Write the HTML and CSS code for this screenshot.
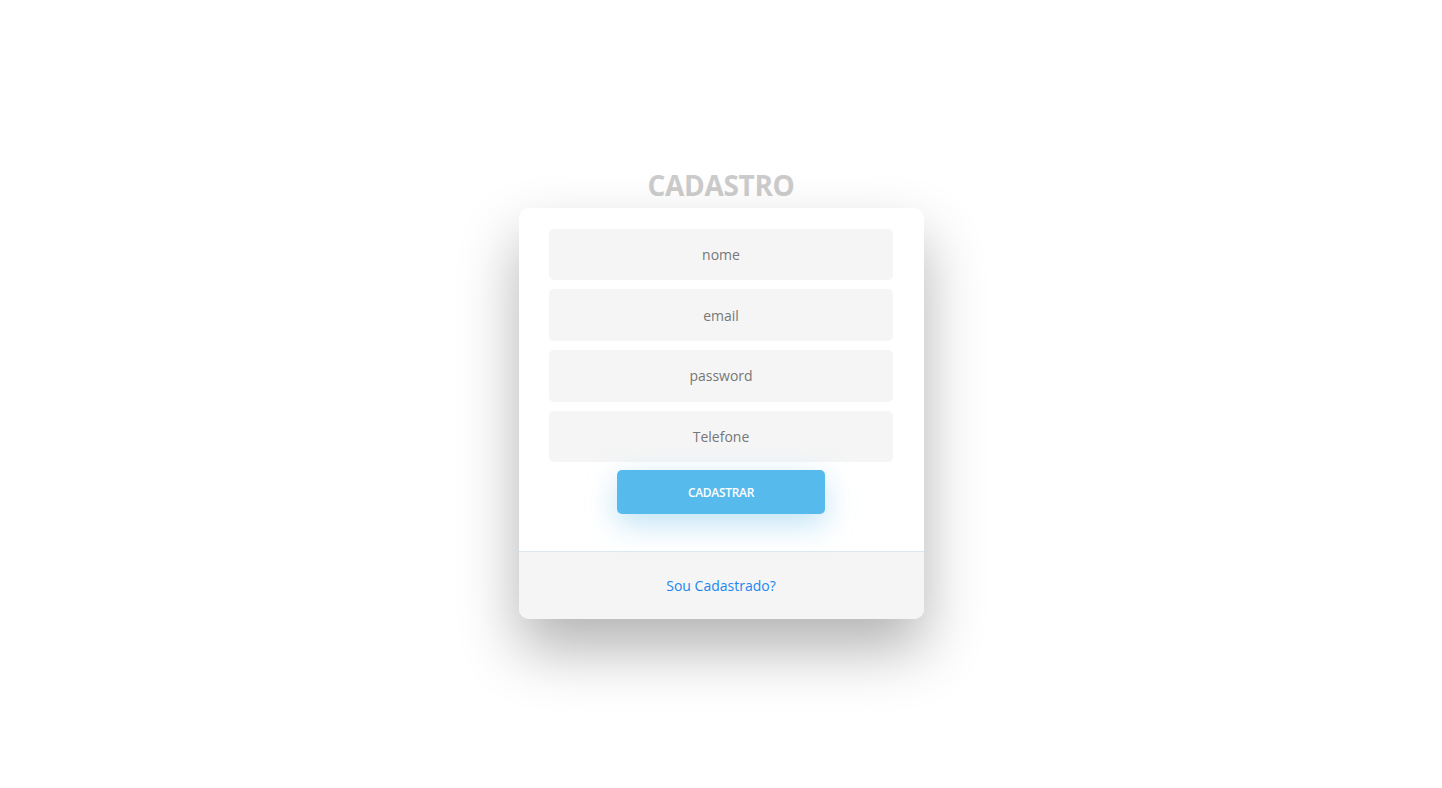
FILE: index.html
```html
<!DOCTYPE html>
<html lang="pt">
<head>
<meta charset="utf-8">
<title>Cadastro</title>
<link rel="stylesheet" href="styles.css">
</head>
<body>
<div class="wrapper">
  <h2 class="title">CADASTRO</h2>
  <div class="form-content">
    <form class="form">
      <input class="field" type="text" placeholder="nome">
      <input class="field" type="text" placeholder="email">
      <input class="field" type="text" placeholder="password">
      <input class="field" type="text" placeholder="Telefone">
      <button class="submit" type="button">CADASTRAR</button>
    </form>
    <div class="form-footer">
      <a class="link" href="#">Sou Cadastrado?</a>
    </div>
  </div>
</div>
</body>
</html>
```

FILE: styles.css
```css
html, body {
  margin: 0;
  padding: 0;
  background: #ffffff;
  font-family: "Open Sans", "Noto Sans", sans-serif;
}

.wrapper {
  min-height: 100vh;
  display: flex;
  flex-direction: column;
  align-items: center;
  justify-content: center;
  box-sizing: border-box;
  padding-bottom: 2px;
}

.title {
  margin: 0 0 5px 0;
  font-size: 28px;
  line-height: 36px;
  font-weight: 700;
  color: #cccccc;
  letter-spacing: -0.3px;
}

.form-content {
  width: 405px;
  background: #ffffff;
  border-radius: 10px;
  box-shadow: 0 30px 60px 0 rgba(0, 0, 0, 0.3);
  text-align: center;
  overflow: hidden;
}

.form {
  display: flex;
  flex-direction: column;
  align-items: center;
  padding: 21px 0 37px 0;
  gap: 9px;
}

.field {
  box-sizing: border-box;
  width: 344px;
  height: 51.6px;
  background: #f5f5f5;
  border: none;
  border-radius: 5px;
  text-align: center;
  font-family: inherit;
  font-size: 14px;
  color: #0d0d0d;
  outline: none;
}

.field::placeholder {
  color: #777777;
}

.submit {
  width: 208px;
  height: 44px;
  margin-top: -1px;
  background: #56baed;
  border: none;
  border-radius: 5px;
  color: #ffffff;
  font-family: inherit;
  font-size: 12px;
  font-weight: 600;
  letter-spacing: -0.3px;
  box-shadow: 0 10px 30px 0 rgba(95, 186, 233, 0.4);
  cursor: pointer;
}

.form-footer {
  background: #f5f5f5;
  border-top: 1px solid #dce8f1;
  height: 67px;
  display: flex;
  align-items: center;
  justify-content: center;
}

.link {
  color: #1a86f0;
  text-decoration: none;
  font-size: 14px;
}
```
